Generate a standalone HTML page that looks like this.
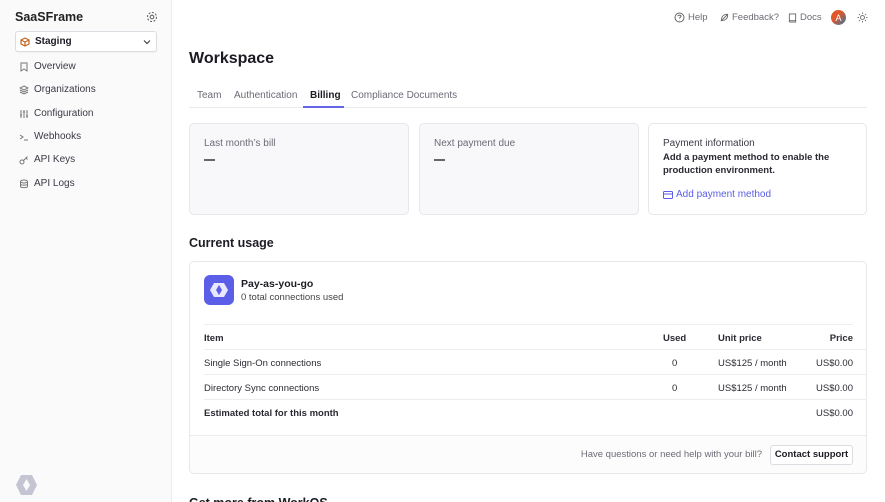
<!DOCTYPE html>
<html><head><style>
*{box-sizing:border-box;margin:0;padding:0}
html,body{width:885px;height:502px;overflow:hidden}
body{font-family:"Liberation Sans",sans-serif;color:#1c1c24;background:#fff;position:relative;font-size:10px}
.sb{position:absolute;left:0;top:0;width:172px;height:502px;background:#fafafb;border-right:1px solid #ececf0}
.abs{position:absolute}
.nav{position:absolute;left:19px;display:flex;align-items:center;gap:5px;color:#3a3a44;font-size:10px}
.nav svg{width:10px;height:10px}
.card{position:absolute;border:1px solid #e6e6ec;border-radius:5px}
.muted{color:#6b6b76}
.row{position:absolute;left:204px;width:649px;font-size:9.5px;color:#2a2a33}
.line{position:absolute;left:204px;width:663px;height:1px;background:#ededf1}
.top{position:absolute;top:12px;display:flex;align-items:center;gap:3px;color:#6b6b76;font-size:9.5px}
</style></head><body>
<div class="sb"></div>
<div class="abs" style="left:15px;top:10px;font-size:12.5px;font-weight:bold;color:#222">SaaSFrame</div>
<svg class="abs" style="left:146px;top:11px" width="12" height="12" viewBox="0 0 12 12" fill="none" stroke="#666" stroke-width="1.1"><circle cx="6" cy="6" r="1.8"/><circle cx="6" cy="6" r="4.5" stroke-dasharray="2 1.5"/></svg>
<div class="abs" style="left:15px;top:31px;width:142px;height:21px;background:#fff;border:1px solid #dcdce2;border-radius:3px;box-shadow:0 1px 1px rgba(0,0,0,.04)"></div>
<svg class="abs" style="left:20px;top:37px" width="10" height="10" viewBox="0 0 10 10" fill="none" stroke="#c0641e" stroke-width="1.2"><path d="M5 1L9 3V7L5 9L1 7V3Z M1 3L5 5L9 3 M5 5V9"/></svg>
<div class="abs" style="left:35px;top:36px;font-size:10px;font-weight:bold">Staging</div>
<svg class="abs" style="left:143px;top:39px" width="8" height="6" viewBox="0 0 8 6" fill="none" stroke="#444" stroke-width="1.2"><path d="M1 1.5L4 4.5L7 1.5"/></svg>
<div class="nav" style="top:61px"><svg viewBox="0 0 10 10" fill="none" stroke="#777"><path d="M2 1H8V9L5 7L2 9Z"/></svg>Overview</div>
<div class="nav" style="top:84px"><svg viewBox="0 0 10 10" fill="none" stroke="#777"><path d="M5 1L9 3L5 5L1 3Z M1 5L5 7L9 5 M1 7L5 9L9 7"/></svg>Organizations</div>
<div class="nav" style="top:108px"><svg viewBox="0 0 10 10" fill="none" stroke="#777"><path d="M2 1V9M5 1V9M8 1V9M1 6H3M4 3H6M7 7H9"/></svg>Configuration</div>
<div class="nav" style="top:131px"><svg viewBox="0 0 10 10" fill="none" stroke="#777"><path d="M1 3L4 5L1 7M5 8H9"/></svg>Webhooks</div>
<div class="nav" style="top:154px"><svg viewBox="0 0 10 10" fill="none" stroke="#777"><circle cx="3" cy="7" r="2"/><path d="M4.5 5.5L8.5 1.5M7 3L8.5 4.5"/></svg>API Keys</div>
<div class="nav" style="top:178px"><svg viewBox="0 0 10 10" fill="none" stroke="#777"><ellipse cx="5" cy="2.5" rx="3.5" ry="1.5"/><path d="M1.5 2.5V7.5C1.5 9 8.5 9 8.5 7.5V2.5M1.5 5C1.5 6.5 8.5 6.5 8.5 5"/></svg>API Logs</div>
<svg class="abs" style="left:15px;top:474px" width="23" height="22" viewBox="0 0 23 22"><path d="M6 1H17L22 11L17 21H6L1 11Z" fill="#c4c4d2"/><path d="M11.5 5L15 11L11.5 17L8 11Z" fill="#fafafb"/></svg>

<div class="top" style="left:674px"><svg width="11" height="11" viewBox="0 0 11 11" fill="none" stroke="#666"><circle cx="5.5" cy="5.5" r="4.5"/><path d="M4 4.3C4 2.8 7 2.8 7 4.3C7 5.3 5.5 5.3 5.5 6.5M5.5 8V8.3"/></svg>Help</div>
<div class="top" style="left:719px"><svg width="10" height="10" viewBox="0 0 11 11" fill="none" stroke="#666"><path d="M2 9L9 2M3 8C2 5 5 1 9.5 1.5C10 6 6 9 3 8Z"/></svg>Feedback?</div>
<div class="top" style="left:788px"><svg width="9" height="10" viewBox="0 0 10 11" fill="none" stroke="#666"><path d="M1.5 1H8.5V10H2.5C1.8 10 1.5 9.5 1.5 9V1ZM1.5 8.5H8.5"/></svg>Docs</div>
<div class="abs" style="left:831px;top:10px;width:15px;height:15px;border-radius:50%;background:linear-gradient(135deg,#e0572a 40%,#2f78a8);color:#fff;font-size:9px;display:flex;align-items:center;justify-content:center">A</div>
<svg class="abs" style="left:857px;top:12px" width="11" height="11" viewBox="0 0 11 11" fill="none" stroke="#777"><circle cx="5.5" cy="5.5" r="2"/><path d="M5.5 0.5V2M5.5 9V10.5M0.5 5.5H2M9 5.5H10.5M2 2L3 3M8 8L9 9M2 9L3 8M8 3L9 2"/></svg>

<div class="abs" style="left:189px;top:50px;font-size:16px;font-weight:bold;color:#1a1a22">Workspace</div>
<div class="abs" style="left:189px;top:107px;width:678px;height:1px;background:#ebebef"></div>
<div class="abs muted" style="left:197px;top:90px;font-size:10px">Team</div>
<div class="abs muted" style="left:234px;top:90px;font-size:10px">Authentication</div>
<div class="abs" style="left:310px;top:90px;font-size:10px;font-weight:bold">Billing</div>
<div class="abs" style="left:303px;top:106px;width:41px;height:2px;background:#6466e8"></div>
<div class="abs muted" style="left:351px;top:90px;font-size:10px">Compliance Documents</div>

<div class="card" style="left:189px;top:123px;width:220px;height:92px;background:#f8f8fb"></div>
<div class="abs muted" style="left:204px;top:138px">Last month’s bill</div>
<div class="abs" style="left:204px;top:159px;width:11px;height:1.5px;background:#666"></div>
<div class="card" style="left:419px;top:123px;width:220px;height:92px;background:#f8f8fb"></div>
<div class="abs muted" style="left:434px;top:138px">Next payment due</div>
<div class="abs" style="left:434px;top:159px;width:11px;height:1.5px;background:#666"></div>
<div class="card" style="left:648px;top:123px;width:219px;height:92px"></div>
<div class="abs" style="left:663px;top:138px;color:#3a3a44">Payment information</div>
<div class="abs" style="left:663px;top:152px;font-weight:bold;font-size:9.5px;line-height:12.5px;color:#2a2a33">Add a payment method to enable the<br>production environment.</div>
<svg class="abs" style="left:663px;top:191px" width="10" height="8" viewBox="0 0 10 8" fill="none" stroke="#5b5ee6"><rect x="0.5" y="0.5" width="9" height="7" rx="1"/><path d="M0.5 3H9.5"/></svg>
<div class="abs" style="left:676px;top:189px;color:#5b5ee6;font-size:10px">Add payment method</div>

<div class="abs" style="left:189px;top:236px;font-size:12.5px;font-weight:bold">Current usage</div>
<div class="card" style="left:189px;top:261px;width:678px;height:213px"></div>
<div class="abs" style="left:190px;top:435px;width:676px;height:38px;background:#fcfcfd;border-top:1px solid #ececf0;border-radius:0 0 5px 5px"></div>
<svg class="abs" style="left:204px;top:275px" width="30" height="30" viewBox="0 0 30 30"><rect width="30" height="30" rx="6" fill="#5b5ee6"/><path d="M10 8H20L24 15L20 22H10L6 15Z" fill="#e8e8ff"/><path d="M15 10L18 15L15 20L12 15Z" fill="#5b5ee6"/></svg>
<div class="abs" style="left:241px;top:278px;font-size:10.5px;font-weight:bold">Pay-as-you-go</div>
<div class="abs" style="left:241px;top:292px;font-size:9.5px;color:#444">0 total connections used</div>
<div class="line" style="top:324px;width:649px"></div>
<div class="row" style="top:333px;font-weight:bold">Item<span class="abs" style="left:459px;top:0">Used</span><span class="abs" style="left:514px">Unit price</span><span class="abs" style="right:0">Price</span></div>
<div class="line" style="top:349px"></div>
<div class="row" style="top:358px">Single Sign-On connections<span class="abs" style="left:468px">0</span><span class="abs" style="left:514px">US$125 / month</span><span class="abs" style="right:0">US$0.00</span></div>
<div class="line" style="top:374px"></div>
<div class="row" style="top:383px">Directory Sync connections<span class="abs" style="left:468px">0</span><span class="abs" style="left:514px">US$125 / month</span><span class="abs" style="right:0">US$0.00</span></div>
<div class="line" style="top:399px"></div>
<div class="row" style="top:408px;font-weight:bold">Estimated total for this month<span class="abs" style="right:0;font-weight:normal">US$0.00</span></div>
<div class="abs muted" style="right:123px;top:449px;font-size:9.5px;white-space:nowrap">Have questions or need help with your bill?</div>
<div class="abs" style="left:770px;top:445px;width:83px;height:20px;border:1px solid #dcdce2;border-radius:3px;background:#fff;font-size:9.5px;font-weight:bold;text-align:center;line-height:18px">Contact support</div>
<div class="abs" style="left:189px;top:496px;font-size:12.5px;font-weight:bold">Get more from WorkOS</div>
</body></html>
